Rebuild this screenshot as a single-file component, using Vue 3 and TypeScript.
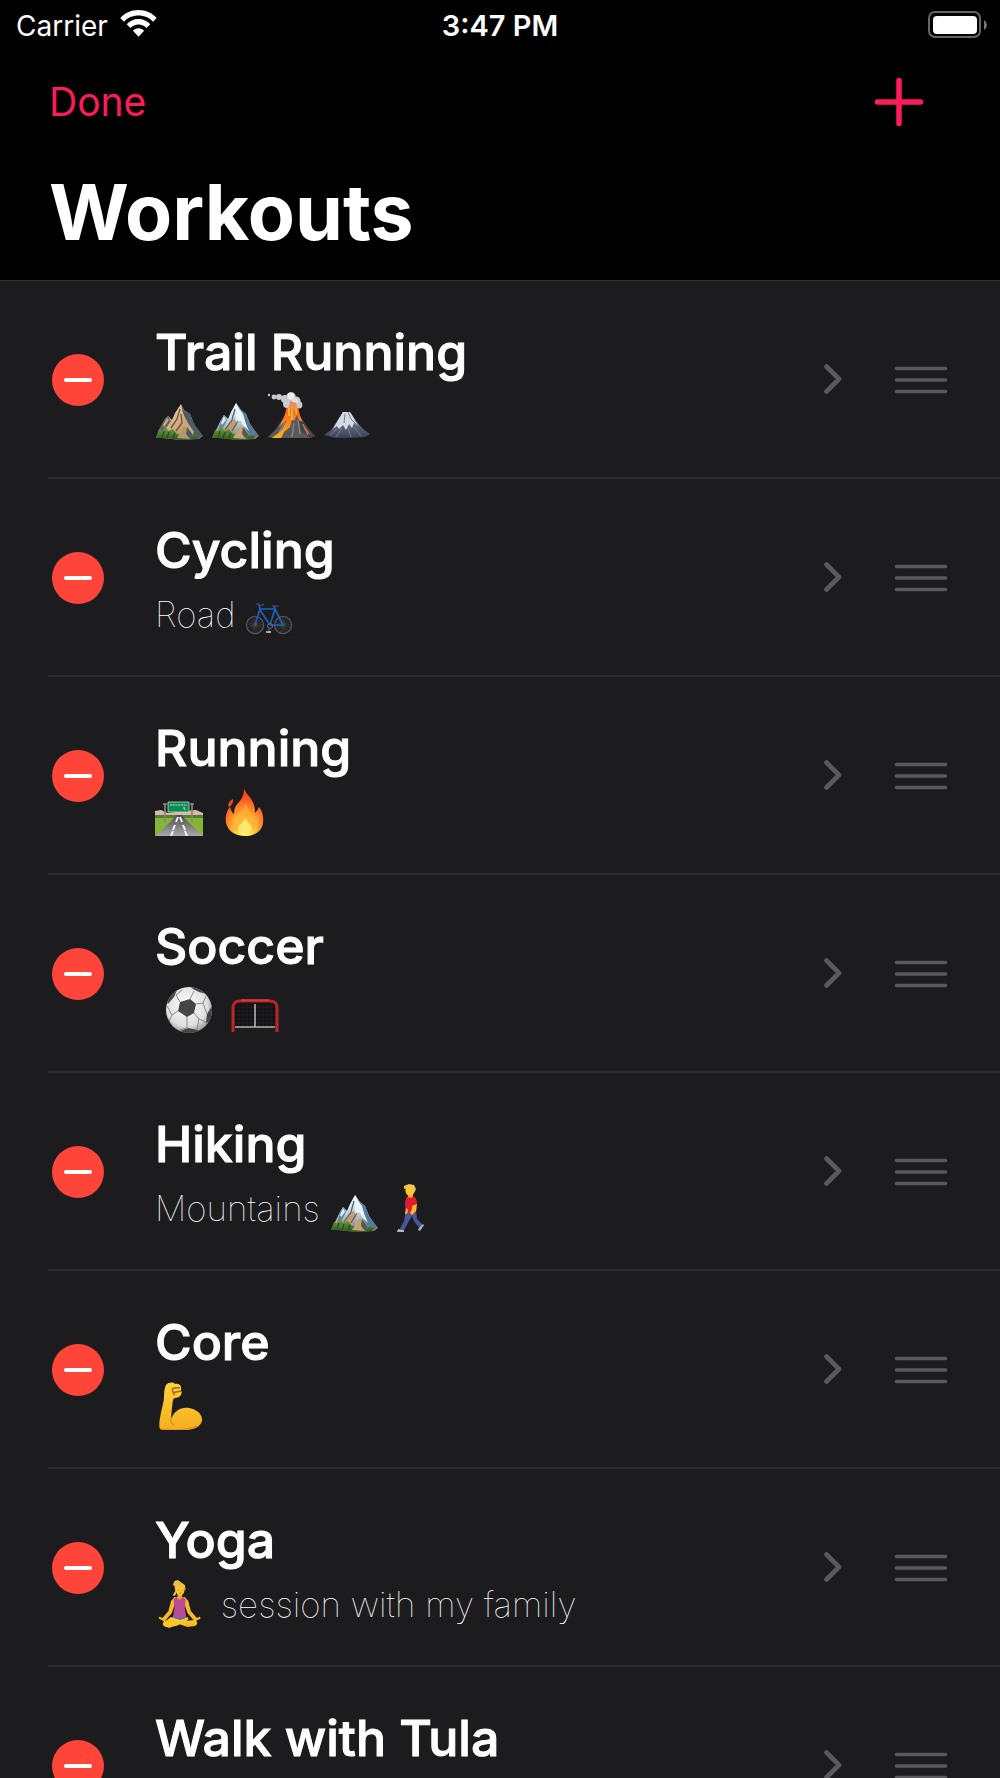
<script setup lang="ts">
interface Part {
  emoji?: string
  text?: string
}
interface Workout {
  name: string
  detail: Part[]
}

const workouts: Workout[] = [
  {
    name: 'Trail Running',
    detail: [{ emoji: 'mountain' }, { emoji: 'snow-mountain' }, { emoji: 'volcano' }, { emoji: 'fuji' }],
  },
  { name: 'Cycling', detail: [{ text: 'Road ' }, { emoji: 'bicycle' }] },
  { name: 'Running', detail: [{ emoji: 'motorway' }, { text: ' ' }, { emoji: 'fire' }] },
  { name: 'Soccer', detail: [{ text: ' ' }, { emoji: 'ball' }, { text: ' ' }, { emoji: 'goal' }] },
  { name: 'Hiking', detail: [{ text: 'Mountains ' }, { emoji: 'snow-mountain' }, { emoji: 'walker' }] },
  { name: 'Core', detail: [{ emoji: 'muscle' }] },
  { name: 'Yoga', detail: [{ emoji: 'yoga' }, { text: ' session with my family' }] },
  { name: 'Walk with Tula', detail: [] },
]
</script>

<template>
  <div class="screen">
    <svg class="defs" aria-hidden="true">
      <defs>
        <linearGradient id="g-sand" x1="0" y1="0" x2="1" y2="1">
          <stop offset="0" stop-color="#f8e0b0" />
          <stop offset="0.6" stop-color="#c9a274" />
          <stop offset="1" stop-color="#54606a" />
        </linearGradient>
        <linearGradient id="g-snow" x1="0" y1="0" x2="0" y2="1">
          <stop offset="0" stop-color="#ffffff" />
          <stop offset="0.45" stop-color="#c4d8e4" />
          <stop offset="1" stop-color="#8b7459" />
        </linearGradient>
        <linearGradient id="g-grass" x1="0" y1="0" x2="0" y2="1">
          <stop offset="0" stop-color="#6fa53f" />
          <stop offset="1" stop-color="#2f5a20" />
        </linearGradient>
        <linearGradient id="g-fuji" x1="0" y1="0" x2="0" y2="1">
          <stop offset="0" stop-color="#8793a6" />
          <stop offset="1" stop-color="#3b4154" />
        </linearGradient>
        <linearGradient id="g-lava" x1="0" y1="0" x2="0" y2="1">
          <stop offset="0" stop-color="#ff5a1f" />
          <stop offset="1" stop-color="#ffb21c" />
        </linearGradient>
        <radialGradient id="g-fire" cx="0.5" cy="0.86" r="0.8">
          <stop offset="0" stop-color="#fffbd0" />
          <stop offset="0.22" stop-color="#ffe24a" />
          <stop offset="0.5" stop-color="#ff9a2b" />
          <stop offset="0.85" stop-color="#fb4a26" />
          <stop offset="1" stop-color="#f03a22" />
        </radialGradient>
        <radialGradient id="g-ball" cx="0.45" cy="0.4" r="0.6">
          <stop offset="0" stop-color="#ffffff" />
          <stop offset="0.75" stop-color="#dedede" />
          <stop offset="1" stop-color="#9c9c9c" />
        </radialGradient>
        <linearGradient id="g-skin" x1="0" y1="0" x2="0" y2="1">
          <stop offset="0" stop-color="#ffd23c" />
          <stop offset="1" stop-color="#f5ae1d" />
        </linearGradient>
        <linearGradient id="g-tar" x1="0" y1="0" x2="0" y2="1">
          <stop offset="0" stop-color="#4b4b4d" />
          <stop offset="1" stop-color="#a9a9ab" />
        </linearGradient>
        <clipPath id="c-ball"><circle cx="24" cy="24" r="23" /></clipPath>

        <symbol id="mountain" viewBox="0 0 48 48">
          <path d="M1 46 4 38 10 27 13 24 17 28 20 21 26 12 29 18 35 22 39 32 44 39 48 44 44 47 26 48 8 46Z" fill="url(#g-sand)" />
          <path d="M26 12 29 18 35 22 39 32 44 39 48 44 40 44 35 36 31 28 28 21Z" fill="#4b5c68" />
          <path d="M29 24 33 31 39 40 36 44 30 35Z" fill="#c8a67c" />
          <path d="M10 27 13 24 16 29 11 36 7 40 4 38Z" fill="#5d6264" />
          <path d="M12 26 14 28 9 35 8 33Z" fill="#c9ae86" />
          <path d="M25 17 22 27 16 36M26 22 27 31 21 39" fill="none" stroke="#6f583f" stroke-width="1.4" />
          <path d="M1 46 4 37 7 39 11 34 13 39 18 37 22 42 27 42 32 45 39 43 45 44 42 47 26 48 8 46Z" fill="url(#g-grass)" />
          <path d="M9 39 7 45M14 40 12 46M20 41 18 46" stroke="#264b1c" stroke-width="1.2" />
          <path d="M22 46 28 36 32 35 38 43 35 47Z" fill="#b8956b" />
          <path d="M32 35 38 43 35 47 31 42Z" fill="#4d5a5c" />
        </symbol>

        <symbol id="snow-mountain" viewBox="0 0 48 48">
          <path d="M1 46 5 38 10 28 13 23 17 27 20 20 25 11 30 18 35 22 39 32 44 39 48 44 44 47 26 48 8 46Z" fill="url(#g-snow)" />
          <path d="M25 11 30 18 35 22 39 32 44 39 48 44 40 45 34 36 31 27 28 22Z" fill="#557b9b" />
          <path d="M25 11 29 18 32 22 35 32 38 39 32 33 29 28 26 32 25 24Z" fill="#eaf4fa" />
          <path d="M10 28 13 23 16 28 12 36 7 39Z" fill="#5f86a0" />
          <path d="M13 24 15 28 11 33 10 31Z" fill="#dcebf3" />
          <path d="M20 29 15 36 12 41 20 40 26 33 24 27ZM29 34 34 40 40 44 30 44Z" fill="#c39b6d" />
          <path d="M24 17 21 28 14 38M27 29 21 39" fill="none" stroke="#51616c" stroke-width="1.3" />
          <path d="M1 46 4 38 7 39 11 34 13 39 18 37 22 42 27 42 32 45 39 43 45 44 42 47 26 48 8 46Z" fill="url(#g-grass)" />
          <path d="M9 39 7 45M14 40 12 46M20 41 18 46" stroke="#264b1c" stroke-width="1.2" />
          <path d="M22 46 28 36 32 35 38 43 35 47Z" fill="#c5a277" />
          <path d="M32 35 38 43 35 47 31 42Z" fill="#4d5a5c" />
        </symbol>

        <symbol id="volcano" viewBox="0 0 48 48">
          <path d="M1 45 9 37 15 28 19 22H32L36 29 42 37 48 44 43 46H5Z" fill="#5a5859" />
          <path d="M31 22 36 29 42 37 48 44 43 46 34 39Z" fill="#414146" />
          <path d="M18 30 13 39 19 37M31 28 33 42M27 31 25 45M36 32 41 43" fill="none" stroke="#89878a" stroke-width="1.4" />
          <path d="M18 22 20 14H31L33 24 36 30 32 28 30 23 27 29 25 27 23 35 17 40 14 46H5L15 38 20 28 16 31 12 35 17 25Z" fill="url(#g-lava)" />
          <path d="M35 32 41 39 45 44 38 38Z" fill="#f16a26" />
          <path d="M22 16V24M25 15V28M29 16V22" stroke="#ffd43b" stroke-width="1.4" />
          <g fill="#cbc9cb">
            <circle cx="2" cy="3" r="1.2" /><circle cx="7" cy="5" r="2.4" /><circle cx="12" cy="5" r="3" />
            <circle cx="18" cy="7" r="4" /><circle cx="24" cy="5" r="4.8" /><circle cx="29" cy="9" r="4.6" />
            <circle cx="20" cy="12" r="4" /><circle cx="32" cy="13" r="3.4" />
          </g>
          <circle cx="24" cy="4" r="3.4" fill="#efeeef" /><circle cx="28" cy="9" r="3" fill="#e3dfdf" />
          <circle cx="26" cy="14" r="4" fill="#f58b55" />
        </symbol>

        <symbol id="fuji" viewBox="0 0 48 48">
          <path d="M1 43 8 38 15 28 20 20H27L33 29 40 37 47 42 42 45 28 46 12 46Z" fill="url(#g-fuji)" />
          <path d="M20 20H27L32 28 35 34 31 31 29 36 26 32 23 38 20 33 16 37 14 34 10 37 15 28Z" fill="#d3dae4" />
          <path d="M25 20 28 27 34 33M22 22 21 31M19 36 13 45M25 36 28 45M31 35 38 44M14 37 7 43" fill="none" stroke="#737d90" stroke-width="1" />
        </symbol>

        <symbol id="bicycle" viewBox="0 0 48 48">
          <g fill="none" stroke="#54555a">
            <circle cx="10" cy="35" r="8.6" stroke-width="1.3" /><circle cx="38" cy="35" r="8.6" stroke-width="1.3" />
            <path d="M10 26V44M1 35H19M4 29 16 41M16 29 4 41M7 27 13 43M13 27 7 43M2 32 18 38M18 32 2 38M38 26V44M29 35H47M32 29 44 41M44 29 32 41M35 27 41 43M41 27 35 43M30 32 46 38M46 32 30 38" stroke-width="0.5" />
            <path d="M11 14H14L15 16 19 14M27 16H34M24 37V42" stroke-width="1.1" />
          </g>
          <path d="M10 35 15 19H30L38 35H25L15 20M30 19 25 35M15 19 14 15M30 19 29 16" fill="none" stroke="#1762bd" stroke-width="1.7" stroke-linejoin="round" />
          <circle cx="25" cy="36" r="2.5" fill="none" stroke="#68696c" />
          <path d="M21 42H26" stroke="#b9b9b9" stroke-width="1.8" />
        </symbol>

        <symbol id="motorway" viewBox="1 0 48 48">
          <path d="M1 23 7 22 14 25 30 23 42 22 49 25V30H1Z" fill="#d8b9ae" />
          <path d="M1 28H49V48H1Z" fill="#84b535" /><path d="M1 27H49V30H1Z" fill="#557e2e" />
          <path d="M23 27H27L49 48H2Z" fill="url(#g-tar)" />
          <path d="M24 29 22 34M21 37 19 42M19 43 17 48M26 29 28 34M29 37 31 42M31 43 33 48" stroke="#f5f5f5" stroke-width="2" />
          <path d="M11 34V16M38 34V15M9 16H13M36 16H40" stroke="#85858a" stroke-width="1.7" />
          <path d="M14 14H35V24H14Z" fill="#0b8c51" stroke="#c2d8cb" stroke-width="0.8" />
          <path d="M16 17H33M29 20H31V22" stroke="#b9e3cb" fill="none" stroke-dasharray="2 0.7" />
        </symbol>

        <symbol id="fire" viewBox="0 0 48 48">
          <path d="M23 0C24 5 31 10 33 17 34 20 34 23 34 25 36 23 37 21 38 19 41 22 43 29 42 35 41 43 34 48 24 48 14 48 7 43 5 35 4 29 6 22 9 19 10 22 11 25 13 26 13 20 15 17 19 13 22 9 23 5 23 0Z" fill="url(#g-fire)" />
          <path d="M12 11C12 14 12 17 8 19 6 17 8 13 12 11Z" fill="#ef4427" />
          <path d="M25 15C25 22 32 25 31 33 34 32 36 29 37 26 38 36 33 45 24 46 14 45 10 38 11 30 13 33 15 34 17 34 15 26 24 23 25 15Z" fill="#ffad32" opacity="0.7" />
          <path d="M24 29C25 34 31 36 31 41 30 45 27 47 24 47 20 47 17 45 17 41 17 37 23 35 24 29Z" fill="#fff078" opacity="0.8" />
        </symbol>

        <symbol id="ball" viewBox="0 0 48 48">
          <circle cx="24" cy="24" r="23" fill="url(#g-ball)" />
          <g clip-path="url(#c-ball)">
            <path d="M15 16 25 13 31 18 29 27 22 31 13 25ZM25 0 34 1 41 8 34 6 28 3ZM0 13 8 4 12 4 9 11 3 18ZM47 20 42 28 41 37 47 35ZM15 45 23 42 33 44 31 49H17ZM0 27 5 36 7 41 0 36Z" fill="#464648" />
            <path d="M25 13 29 5M31 18 38 17 42 28M38 17 42 8M29 27 34 33 41 36M34 33 32 43M22 31 22 42M13 25 7 29 4 35M7 29 2 20M15 16 11 9 17 4M22 42 14 44" fill="none" stroke="#8b8b8d" stroke-width="1" />
          </g>
        </symbol>

        <symbol id="goal" viewBox="0 0 48 48">
          <path d="M4 42V20Q4 16 9 16H39Q44 16 44 20V42Z" fill="#111113" />
          <path d="M8 17V42M12 17V42M16 17V42M20 17V42M28 17V42M32 17V42M36 17V42M40 17V42M4 21H44M4 25H44M4 29H44M4 33H44M4 37H44" stroke="#232326" stroke-width="0.7" />
          <path d="M24 18V41M4 41H44" stroke="#b9b3b1" stroke-width="1.6" />
          <path d="M2 46V22Q2 15 9 15H39Q46 15 46 22V46" fill="none" stroke="#bb2428" stroke-width="3" />
          <path d="M10 14H38" stroke="#ed5551" stroke-width="1" />
        </symbol>

        <symbol id="walker" viewBox="0 0 48 48">
          <path d="M20 27 18 37 14 45 18 46 23 37 26 32 28 37 33 44 37 41 31 35 30 27Z" fill="#46579c" />
          <path d="M12 45 18 46V48H11ZM33 44 37 40 38 41 34 47 32 46Z" fill="#b2b5bf" />
          <path d="M22 12H27Q31 14 31 20L30 29H20L19 20Q19 14 22 12Z" fill="#dd1b33" />
          <path d="M26 22 31 20 30 27 26 31 24 29 26 25Z" fill="#fbbd26" />
          <path d="M20 24 19 30 21 30 22 26Z" fill="#fbbd26" />
          <path d="M22 10H27V13L24 14 22 13Z" fill="#eca31f" />
          <ellipse cx="24" cy="6.500" rx="4.600" ry="5.200" fill="#ffc72d" />
          <path d="M18 5 18 2 23 0 28 1 30 5 28 9 26 6 23 4Z" fill="#f0c550" />
        </symbol>

        <symbol id="muscle" viewBox="0 0 48 48">
          <path d="M11 3C14 0 18 0 20 2 24 1 27 4 26 8 28 12 25 16 20 16 17 17 18 21 17 25L16 37C20 28 26 25 34 26 42 27 48 33 47 39 45 46 36 49 24 48 16 49 8 48 5 47 3 43 6 30 8 22 10 15 8 9 11 3Z" fill="url(#g-skin)" />
          <path d="M17 7C20 5 22 6 25 6M18 10C21 11 24 9 26 9M17 7C18 9 17 11 20 13" fill="none" stroke="#a96616" stroke-width="1.5" />
          <path d="M16 37C15 39 16 41 19 43M6 47C17 49 35 48 43 44" fill="none" stroke="#df8e1b" stroke-width="1.4" />
        </symbol>

        <symbol id="yoga" viewBox="0 0 48 48">
          <g transform="translate(4 0) scale(0.86 1)">
            <path d="M18 17 14 21 11 31 3 39 6 42 15 33 18 25H30L33 33 42 42 45 39 37 31 34 21 30 17Z" fill="#f9b925" />
            <path d="M17 19 20 17 28 17 31 19 30 28 32 38H16L18 28Z" fill="#b94b98" />
            <path d="M14 37 30 41 42 40Q47 43 42 46L33 47 23 44 12 48Q4 46 6 42Z" fill="url(#g-skin)" />
            <path d="M34 37 20 41 6 41Q2 45 8 47L20 46 34 40Z" fill="#ffc629" />
            <path d="M17 37 24 39 31 37" fill="none" stroke="#5a6fc4" stroke-width="1.5" />
            <path d="M1 38 6 40M47 38 42 40" stroke="#f9b925" stroke-width="2.4" stroke-linecap="round" />
            <path d="M22 13H27V18L24 20 21 18Z" fill="#eca31f" />
            <ellipse cx="24.500" cy="9" rx="5.500" ry="6.500" fill="#ffc62d" />
            <path d="M18 16 16 15 19 11 18 6 16 5 18 1 22 0 25 2 30 5 31 10 27 7 20 8 20 14Z" fill="#eebd4c" />
            <path d="M22 10H23M27 10H28M24 13H26" stroke="#a56612" />
          </g>
        </symbol>
      </defs>
    </svg>

    <header class="header">
      <div class="status">
        <div class="carrier">
          <span>Carrier</span>
          <svg width="37" height="28" viewBox="0 0 37 28" role="img" aria-label="Wi-Fi">
            <g fill="#fff">
              <path d="M18.500 0C26 0 32.500 3 36.700 8L33 11.800C29.500 7.800 24.300 5.600 18.500 5.600S7.500 7.800 4 11.800L.3 8C4.500 3 11 0 18.500 0Z" />
              <path d="M18.500 9C23.200 9 27.300 11 30.300 14.200L26.500 18C24.500 15.700 21.700 14.500 18.500 14.500S12.500 15.700 10.500 18L6.700 14.200C9.700 11 13.800 9 18.500 9Z" />
              <path d="M18.500 18.200C20.800 18.200 22.700 19.100 24.100 20.700L18.500 26.800 12.900 20.700C14.300 19.100 16.200 18.200 18.500 18.200Z" />
            </g>
          </svg>
        </div>
        <span class="time">3:47 PM</span>
        <svg class="battery" width="60" height="28" viewBox="0 0 60 28" role="img" aria-label="Battery full">
          <rect x="1" y="1" width="51" height="25" rx="6" fill="none" stroke="#666" stroke-width="2" />
          <rect x="5" y="5" width="44" height="18" rx="4" fill="#fff" />
          <path d="M56 9Q59 11 59 14T56 19Z" fill="#777" />
        </svg>
      </div>
      <nav class="nav">
        <button class="done" type="button">Done</button>
        <button class="add" type="button" aria-label="Add workout">
          <svg width="50" height="50" viewBox="0 0 50 50" fill="none" stroke="currentColor" stroke-width="5.500" stroke-linecap="round">
            <path d="M25 3.500V46.500M3.500 25H46.500" />
          </svg>
        </button>
      </nav>
      <h1>Workouts</h1>
    </header>

    <ul class="list">
      <li v-for="workout in workouts" :key="workout.name" class="row">
        <button class="remove" type="button" :aria-label="`Delete ${workout.name}`">
          <svg width="28" height="4" viewBox="0 0 28 4"><rect width="28" height="4" rx="2" fill="#fff" /></svg>
        </button>
        <div class="body">
          <h2>{{ workout.name }}</h2>
          <p class="detail"><template v-for="(part, i) in workout.detail" :key="i"><svg v-if="part.emoji" class="emoji" role="img" :aria-label="part.emoji"><use :href="`#${part.emoji}`" /></svg><template v-else>{{ part.text }}</template></template></p>
        </div>
        <svg class="chevron" width="18" height="30" viewBox="0 0 18 30" fill="none" stroke="#5a5a5e" stroke-width="4.600" stroke-linecap="round" stroke-linejoin="round" aria-hidden="true">
          <path d="M2.500 2.500 15 15 2.500 27.500" />
        </svg>
        <button class="grip" type="button" :aria-label="`Reorder ${workout.name}`">
          <svg width="54" height="28" viewBox="0 0 54 28" fill="none" stroke="#5a5a5e" stroke-width="3.600" stroke-linecap="round">
            <path d="M2.500 2.500H51.500M2.500 14H51.500M2.500 25.500H51.500" />
          </svg>
        </button>
      </li>
    </ul>
  </div>
</template>

<style>
body {
  background: #1c1c1e;
}
</style>

<style scoped>
.screen {
  color: #fff;
  font-family: Inter, Roboto, "Liberation Sans", sans-serif;
  height: 100vh;
  overflow: hidden;
}
.defs {
  position: absolute;
  width: 0;
  height: 0;
}
button {
  padding: 0;
  border: 0;
  background: none;
  color: inherit;
  font: inherit;
  display: flex;
  align-items: center;
  justify-content: center;
}
h1,
h2,
p,
ul {
  margin: 0;
  padding: 0;
}
.header {
  background: #000;
  border-bottom: 1px solid #303032;
  padding-bottom: 8px;
}
.status {
  display: grid;
  grid-template-columns: 1fr auto 1fr;
  align-items: center;
  height: 52px;
  padding: 0 12px;
  font-size: 28px;
  line-height: 36px;
}
.carrier {
  display: flex;
  align-items: center;
  gap: 12px;
  padding-left: 4px;
}
.carrier svg {
  margin-bottom: 4px;
}
.time {
  font-size: 29px;
  font-weight: 600;
}
.battery {
  justify-self: end;
  margin-bottom: 2px;
}
.nav {
  display: flex;
  justify-content: space-between;
  align-items: center;
  height: 100px;
  padding: 0 76px 0 49px;
  color: #ff1a58;
}
.done {
  font-size: 39px;
  line-height: 52px;
}
h1 {
  padding-left: 49px;
  font-size: 77px;
  line-height: 120px;
  font-weight: 700;
}
.list {
  list-style: none;
}
.row {
  display: flex;
  align-items: center;
  height: 196px;
  margin-left: 48px;
  padding-right: 52px;
  border-bottom: 2px solid #2b2b2d;
}
.remove {
  flex: none;
  width: 52px;
  height: 52px;
  margin: 2px 51px 0 4px;
  border-radius: 50%;
  background: #ff453a;
}
.body {
  flex: 1;
  min-width: 0;
  height: 120px;
}
h2 {
  font-size: 50px;
  line-height: 66px;
  font-weight: 500;
  -webkit-text-stroke: 1px #fff;
  stroke-linejoin: round;
}
.detail {
  height: 48px;
  margin-top: 7px;
  font-size: 35px;
  line-height: 48px;
  font-weight: 100;
  white-space: pre;
}
.emoji {
  width: 48px;
  height: 48px;
  margin-right: 8px;
  vertical-align: -11px;
}
.chevron {
  flex: none;
  margin-right: 52px;
}
.grip {
  flex: none;
  margin-top: 2px;
}
</style>
